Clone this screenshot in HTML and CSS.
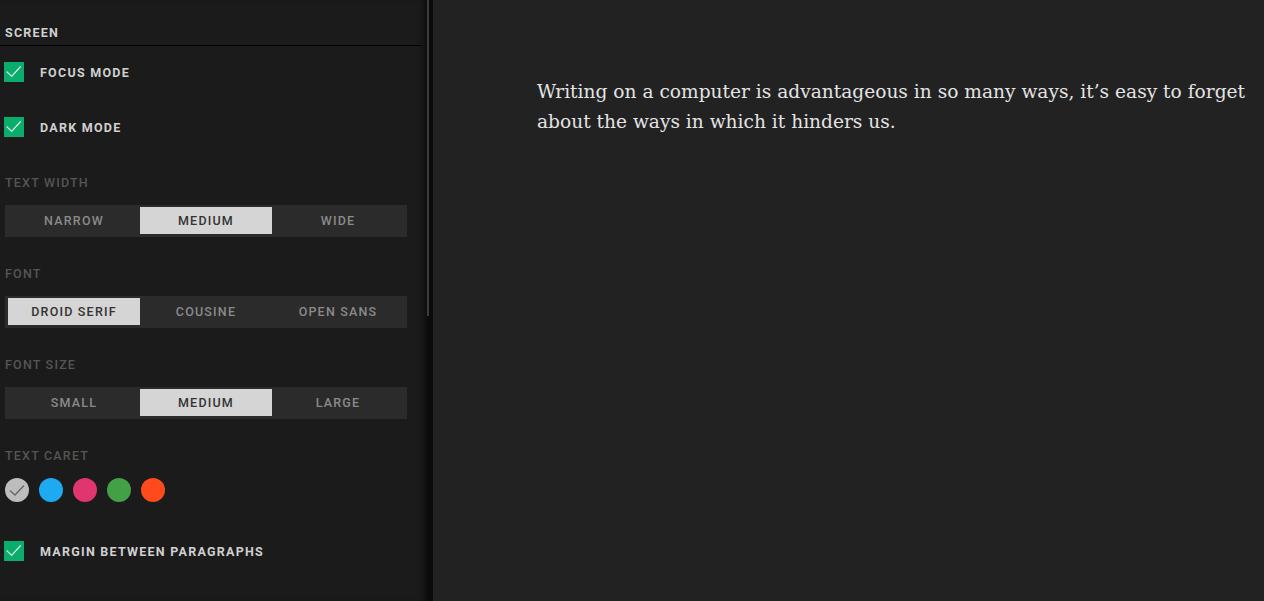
FILE: index.html
```html
<!DOCTYPE html>
<html lang="en">
<head>
    <meta charset="UTF-8">
    <title>Settings</title>
    <link rel="stylesheet" href="styles.css">
</head>
<body>
    <div class="app">
        <aside class="sidebar">
            <div class="panel">
                <h2 class="panel-title">Screen</h2>
                <label class="check first">
                    <span class="box"><svg width="20" height="20" viewBox="0 0 20 20"><path d="M2.7 9.7 L7.7 14.3 L16.7 4.3" fill="none" stroke="#fff" stroke-width="1.1"/></svg></span>
                    <span class="check-label">Focus mode</span>
                </label>
                <label class="check second">
                    <span class="box"><svg width="20" height="20" viewBox="0 0 20 20"><path d="M2.7 9.7 L7.7 14.3 L16.7 4.3" fill="none" stroke="#fff" stroke-width="1.1"/></svg></span>
                    <span class="check-label">Dark mode</span>
                </label>

                <div class="field">
                    <div class="field-label">Text width</div>
                    <div class="segment">
                        <span class="opt">Narrow</span>
                        <span class="opt active">Medium</span>
                        <span class="opt">Wide</span>
                    </div>
                </div>
                <div class="field">
                    <div class="field-label">Font</div>
                    <div class="segment">
                        <span class="opt active">Droid Serif</span>
                        <span class="opt">Cousine</span>
                        <span class="opt">Open Sans</span>
                    </div>
                </div>
                <div class="field">
                    <div class="field-label">Font size</div>
                    <div class="segment">
                        <span class="opt">Small</span>
                        <span class="opt active">Medium</span>
                        <span class="opt">Large</span>
                    </div>
                </div>
                <div class="field">
                    <div class="field-label">Text caret</div>
                    <div class="carets">
                        <span class="dot grey"><svg width="24" height="24" viewBox="0 0 24 24"><path d="M5 12.5 L10 17 L19 7.5" fill="none" stroke="#666" stroke-width="1.3"/></svg></span>
                        <span class="dot blue"></span>
                        <span class="dot pink"></span>
                        <span class="dot green"></span>
                        <span class="dot orange"></span>
                    </div>
                </div>

                <label class="check last">
                    <span class="box"><svg width="20" height="20" viewBox="0 0 20 20"><path d="M2.7 9.7 L7.7 14.3 L16.7 4.3" fill="none" stroke="#fff" stroke-width="1.1"/></svg></span>
                    <span class="check-label">Margin between paragraphs</span>
                </label>
            </div>
            <div class="scroll-thumb"></div>
        </aside>
        <main class="editor">
            <p class="text">Writing on a computer is advantageous in so many ways, it’s easy to forget about the ways in which it hinders us.</p>
        </main>
    </div>
</body>
</html>
```

FILE: styles.css
```css
html, body {
    margin: 0;
    height: 100%;
}
body {
    background-color: #222222;
    font-family: Roboto, 'Liberation Sans', sans-serif;
    overflow: hidden;
}
.app {
    display: flex;
    height: 100%;
}
.sidebar {
    position: relative;
    width: 429px;
    flex: none;
    background-color: #1b1b1b;
    box-shadow: inset -8px 0 10px -6px #000;
    border-right: 4px solid #0b0b0b;
}
.scroll-thumb {
    position: absolute;
    top: 0;
    right: 0;
    width: 2px;
    height: 316px;
    background-color: #3c3c3c;
}
.panel {
    width: 421px;
}
.panel-title {
    margin: 0;
    padding: 25px 5px 4px;
    line-height: 16px;
    font-size: 12.5px;
    font-weight: 700;
    letter-spacing: 1.2px;
    text-transform: uppercase;
    color: #d0d0d0;
    border-bottom: 1px solid #000;
}
.check {
    display: flex;
    align-items: center;
    padding-left: 4px;
    height: 20px;
}
.check.first {
    margin-top: 16px;
}
.check.second {
    margin-top: 35px;
}
.check.last {
    margin-top: 39px;
}
.box {
    width: 20px;
    height: 20px;
    background-color: #0aad6c;
    display: block;
}
.box svg {
    display: block;
}
.check-label {
    margin-left: 16px;
    padding-top: 1px;
    font-size: 12.5px;
    font-weight: 700;
    letter-spacing: 1.25px;
    text-transform: uppercase;
    color: #d0d0d0;
}
.field {
    margin-top: 28px;
    padding-left: 5px;
}
.check.second + .field {
    margin-top: 37px;
}
.field-label {
    padding-top: 1px;
    line-height: 16px;
    font-size: 12.5px;
    font-weight: 500;
    letter-spacing: 1.2px;
    text-transform: uppercase;
    color: #555555;
    margin-bottom: 14px;
}
.segment {
    display: flex;
    width: 396px;
    padding: 2px 3px 3px;
    background-color: #2b2b2b;
}
.opt {
    flex: 1;
    height: 27px;
    line-height: 28px;
    text-align: center;
    font-size: 12.5px;
    font-weight: 500;
    letter-spacing: 1.2px;
    text-transform: uppercase;
    color: #8a8a8a;
}
.opt.active {
    background-color: #d5d5d5;
    color: #333333;
}
.carets {
    display: flex;
    gap: 10px;
}
.dot {
    width: 24px;
    height: 24px;
    border-radius: 50%;
    display: block;
}
.dot svg {
    display: block;
}
.grey { background-color: #bdbdbd; }
.blue { background-color: #1eaaf1; }
.pink { background-color: #e0356e; }
.green { background-color: #43a047; }
.orange { background-color: #fe4a1c; }
.editor {
    flex: 1;
    padding: 77px 0 0 104px;
}
.text {
    margin: 0;
    width: 716px;
    font-family: 'DejaVu Serif', 'Liberation Serif', serif;
    font-size: 18.6px;
    line-height: 30px;
    color: #e4e4e4;
}
```
